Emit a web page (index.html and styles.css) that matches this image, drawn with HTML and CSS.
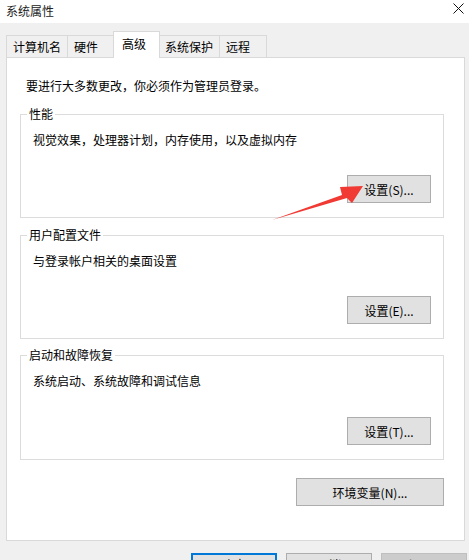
FILE: index.html
```html
<!DOCTYPE html>
<html lang="zh-CN">
<head>
<meta charset="utf-8">
<title>系统属性</title>
<link rel="stylesheet" href="styles.css">
</head>
<body>
<div class="window">
  <div class="titlebar">
    <span class="title">系统属性</span>
    <svg class="close" width="11" height="11" viewBox="0 0 11 11"><path d="M0.5 0.5L10.5 10.5M10.5 0.5L0.5 10.5" stroke="#111" stroke-width="1" fill="none"/></svg>
  </div>
  <div class="tabs">
    <div class="tab">计算机名</div>
    <div class="tab">硬件</div>
    <div class="tab tab-active">高级</div>
    <div class="tab">系统保护</div>
    <div class="tab">远程</div>
  </div>
  <div class="panel">
    <p class="intro">要进行大多数更改，你必须作为管理员登录。</p>
    <div class="group group-first">
      <div class="legend">性能</div>
      <p class="desc">视觉效果，处理器计划，内存使用，以及虚拟内存</p>
      <div class="actions"><button class="btn">设置(S)...</button></div>
    </div>
    <div class="group group-second">
      <div class="legend">用户配置文件</div>
      <p class="desc">与登录帐户相关的桌面设置</p>
      <div class="actions"><button class="btn">设置(E)...</button></div>
    </div>
    <div class="group group-third">
      <div class="legend">启动和故障恢复</div>
      <p class="desc">系统启动、系统故障和调试信息</p>
      <div class="actions actions-low"><button class="btn">设置(T)...</button></div>
    </div>
    <div class="env-row"><button class="btn btn-wide">环境变量(N)...</button></div>
  </div>
  <div class="footer">
    <button class="btn btn-foot btn-ok">确定</button>
    <button class="btn btn-foot">取消</button>
    <button class="btn btn-foot btn-disabled">应用(A)</button>
  </div>
  <svg class="arrow" width="469" height="560" viewBox="0 0 469 560"><polygon points="272,220 342,195 340,187 363,186 352,203 347,198" fill="#f03a33"/></svg>
</div>
</body>
</html>
```
FILE: styles.css
```css
html, body {
  margin: 0;
  padding: 0;
}
body {
  width: 469px;
  height: 560px;
  overflow: hidden;
  background: #f0f0f0;
  font-family: "Noto Sans CJK SC", "Microsoft YaHei", sans-serif;
  font-size: 12px;
  color: #000;
}
.window {
  position: relative;
  width: 469px;
  height: 560px;
  overflow: hidden;
}
.titlebar {
  height: 23px;
  background: #fff;
  display: flex;
  align-items: center;
  justify-content: space-between;
  padding: 0 5px 2px 6px;
  box-sizing: border-box;
}
.title {
  font-size: 12px;
  line-height: 16px;
  color: #222;
}
.close {
  display: block;
  margin-top: -4px;
}
.tabs {
  display: flex;
  align-items: flex-end;
  margin-top: 8px;
  padding-left: 6px;
}
.tab {
  box-sizing: border-box;
  height: 22px;
  min-width: 47px;
  padding: 2px 6px 0 6px;
  border: 1px solid #d9d9d9;
  border-bottom: none;
  background: #f0f0f0;
  line-height: 18px;
  white-space: nowrap;
}
.tab + .tab {
  border-left: none;
}
.tab-active {
  position: relative;
  z-index: 1;
  height: 27px;
  margin: 0 -2px -1px -2px;
  padding: 3px 8px 0 8px;
  background: #fff;
  border-left: 1px solid #d9d9d9;
}
.tab-active + .tab {
  border-left: 1px solid #d9d9d9;
}
.tab + .tab-active {
  border-left: 1px solid #d9d9d9;
}
.panel {
  box-sizing: border-box;
  width: 459px;
  margin-left: 6px;
  background: #fff;
  border: 1px solid #d9d9d9;
  padding: 20px 20px 34px 13px;
}
.intro {
  margin: 0 0 0 6px;
  line-height: 16px;
}
.group {
  border: 1px solid #dcdcdc;
  padding: 0 12px 14px 12px;
}
.group-first { margin-top: 20px; }
.group-second { margin-top: 17px; }
.group-third { margin-top: 16px; }
.legend {
  display: table;
  margin: -9px 0 0 -6px;
  padding: 0 2px;
  background: #fff;
  line-height: 16px;
}
.desc {
  margin: 10px 0 0 0;
  line-height: 16px;
}
.actions {
  display: flex;
  justify-content: flex-end;
  margin-top: 27px;
}
.actions-low {
  margin-top: 28px;
}
.btn {
  box-sizing: border-box;
  width: 84px;
  height: 28px;
  padding: 0;
  background: #e1e1e1;
  border: 1px solid #adadad;
  font-family: inherit;
  font-size: 12px;
  color: #000;
}
.btn-wide {
  width: 148px;
}
.env-row {
  display: flex;
  justify-content: flex-end;
  margin-top: 18px;
}
.footer {
  display: flex;
  justify-content: flex-end;
  gap: 9px;
  margin-top: 12px;
  padding-right: 2px;
}
.btn-foot {
  width: 86px;
  height: 23px;
}
.btn-ok {
  border: 2px solid #0078d7;
}
.btn-disabled {
  background: #cccccc;
  border-color: #bfbfbf;
  color: #838383;
}
.arrow {
  position: absolute;
  left: 0;
  top: 0;
  pointer-events: none;
}
```
